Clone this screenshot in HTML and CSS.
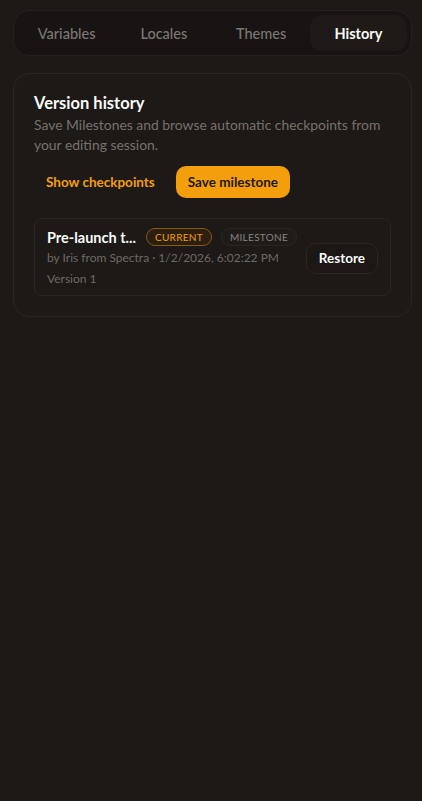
FILE: index.html
```html
<!DOCTYPE html>
<html lang="en">
<head>
<meta charset="utf-8">
<title>Version history</title>
<link rel="stylesheet" href="styles.css">
</head>
<body>
<div class="page">
  <nav class="tabs">
    <button class="tab">Variables</button>
    <button class="tab">Locales</button>
    <button class="tab">Themes</button>
    <button class="tab active">History</button>
  </nav>
  <section class="card">
    <h2 class="title">Version history</h2>
    <p class="desc">Save Milestones and browse automatic checkpoints from your editing session.</p>
    <div class="actions">
      <button class="btn ghost">Show checkpoints</button>
      <button class="btn primary">Save milestone</button>
    </div>
    <div class="entry">
      <div class="entry-info">
        <div class="entry-head">
          <span class="entry-name">Pre-launch t...</span>
          <span class="badge current">CURRENT</span>
          <span class="badge milestone">MILESTONE</span>
        </div>
        <div class="meta">by Iris from Spectra · 1/2/2026, 6:02:22 PM</div>
        <div class="meta">Version 1</div>
      </div>
      <button class="restore">Restore</button>
    </div>
  </section>
</div>
</body>
</html>
```
FILE: styles.css
```css
* { box-sizing: border-box; }
html, body { margin: 0; padding: 0; background: #1c1917; }
body { font-family: Lato, "Noto Sans", sans-serif; color: #f5f5f4; }
button { font-family: inherit; border: 0; background: none; cursor: pointer; }
.page { padding: 10px 10px 0 13px; display: flex; flex-direction: column; gap: 17px; }
.tabs {
  display: grid; grid-template-columns: repeat(4, 1fr);
  height: 46px; padding: 4px; width: 399px;
  background: #171413; border: 1px solid #252120; border-radius: 16px;
}
.tab { color: #7d7773; font-size: 14.5px; font-weight: 500; border-radius: 12px; }
.tab.active { background: #1e1a18; color: #fafaf9; font-weight: 700; }
.card {
  width: 399px; border: 1px solid #2a2523; border-radius: 16px;
  padding: 18px 20px 20px 20px;
}
.title { margin: 0; font-size: 16.5px; font-weight: 700; line-height: 22px; color: #fafaf9; }
.desc { margin: 1px 0 0; font-size: 13.9px; line-height: 20px; color: #78716c; }
.actions { display: flex; gap: 9px; margin-top: 11px; }
.btn { height: 32px; padding: 0 12px; border-radius: 10px; font-size: 13.5px; font-weight: 700; }
.ghost { color: #f59e0b; }
.primary { background: #f59e0b; color: #1c1917; }
.entry {
  margin-top: 20px; border: 1px solid #2a2523; border-radius: 8px;
  padding: 8px 12px 6px 12px; display: flex; align-items: center; justify-content: space-between;
}
.entry-head { display: flex; align-items: center; gap: 9px; height: 20px; }
.entry-name { font-size: 14.5px; font-weight: 700; color: #fafaf9; margin-right: 1px; }
.badge {
  font-size: 10px; letter-spacing: 0.3px; padding: 0 8px; height: 18px; line-height: 16px;
  border-radius: 9px; border: 1px solid;
}
.current { color: #f59e0b; border-color: #8a5a10; background: #2a1f10; }
.milestone { color: #8a8480; border-color: #2a2624; background: #1f1b19; }
.meta { font-size: 12px; line-height: 21px; color: #6f6965; }
.restore {
  height: 31px; padding: 0 12px; border: 1px solid #2a2624; border-radius: 10px;
  font-size: 13.5px; font-weight: 700; color: #fafaf9; background: #1a1715;
}
```
